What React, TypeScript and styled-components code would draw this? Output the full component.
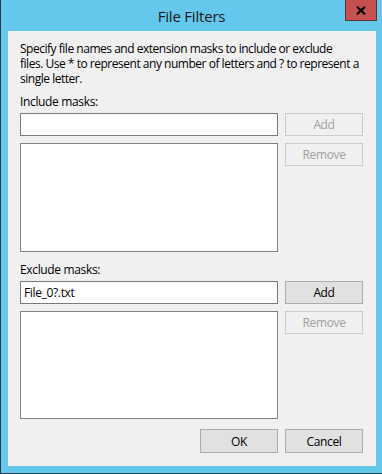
import React from "react";
import styled, { createGlobalStyle } from "styled-components";

const Global = createGlobalStyle`
  html, body { margin: 0; padding: 0; background: #ffffff; }
  * { box-sizing: border-box; }
`;

const FONT = `"Open Sans", "Noto Sans", "Liberation Sans", sans-serif`;

const Window = styled.div`
  width: 382px;
  height: 474px;
  background: #63c8ec;
  border-left: 1px solid #2f3a40;
  border-bottom: 1px solid #2f3a40;
  display: flex;
  flex-direction: column;
  font-family: ${FONT};
  color: #000;
`;

const TitleBar = styled.div`
  height: 31px;
  display: grid;
  grid-template-columns: 1fr auto 1fr;
  align-items: center;
`;

const Title = styled.div`
  grid-column: 2;
  font-size: 15px;
  line-height: 20px;
  color: #1a1a1a;
  letter-spacing: -0.2px;
`;

const CloseButton = styled.div`
  grid-column: 3;
  justify-self: end;
  align-self: start;
  width: 32px;
  height: 21px;
  margin-right: 5px;
  background: #c75050;
  border: 1px solid #5b3232;
  border-top: none;
  display: flex;
  align-items: center;
  justify-content: center;
`;

const Client = styled.div`
  height: 435px;
  margin: 0 6px 0 7px;
  background: #f0f0f0;
  padding: 10px 13px 13px 12px;
  display: flex;
  flex-direction: column;
  font-size: 12px;
  letter-spacing: -0.35px;
`;

const Description = styled.div`
  line-height: 15px;
  white-space: nowrap;
  letter-spacing: -0.48px;
`;

const Label = styled.div<{ $top: number }>`
  line-height: 15px;
  margin-top: ${(p) => p.$top}px;
  margin-bottom: 4px;
`;

const Grid = styled.div<{ $list: number }>`
  display: grid;
  grid-template-columns: 258px 78px;
  grid-template-rows: 23px ${(p) => p.$list}px;
  column-gap: 7px;
  row-gap: 7px;
`;

const TextBox = styled.div`
  background: #fff;
  border: 1px solid #7a7a7a;
  padding: 0 3px;
  display: flex;
  align-items: center;
  line-height: 15px;
`;

const ListBox = styled.div`
  background: #fff;
  border: 1px solid #828282;
`;

const Button = styled.div<{ $disabled?: boolean; $h?: number }>`
  height: ${(p) => p.$h ?? 23}px;
  width: 78px;
  align-self: start;
  border: 1px solid ${(p) => (p.$disabled ? "#cccccc" : "#adadad")};
  background: ${(p) => (p.$disabled ? "#f0f0f0" : "#e1e1e1")};
  color: ${(p) => (p.$disabled ? "#a0a0a0" : "#000")};
  display: flex;
  align-items: center;
  justify-content: center;
  line-height: 15px;
`;

const Footer = styled.div`
  margin-top: 10px;
  display: flex;
  justify-content: flex-end;
  gap: 7px;
`;

export default function App() {
  return (
    <>
      <Global />
      <Window>
        <TitleBar>
          <Title>File Filters</Title>
          <CloseButton>
            <svg width="10" height="9" viewBox="0 0 10 9">
              <path d="M1 0.8 L9 8.2 M9 0.8 L1 8.2" stroke="#000" strokeWidth="2.2" />
            </svg>
          </CloseButton>
        </TitleBar>
        <Client>
          <Description>
            Specify file names and extension masks to include or exclude
            <br />
            files. Use * to represent any number of letters and ? to represent a
            <br />
            single letter.
          </Description>
          <Label $top={8}>Include masks:</Label>
          <Grid $list={109}>
            <TextBox />
            <Button $disabled>Add</Button>
            <ListBox />
            <Button $disabled>Remove</Button>
          </Grid>
          <Label $top={10}>Exclude masks:</Label>
          <Grid $list={108}>
            <TextBox>File_0?.txt</TextBox>
            <Button>Add</Button>
            <ListBox />
            <Button $disabled>Remove</Button>
          </Grid>
          <Footer>
            <Button $h={24}>OK</Button>
            <Button $h={24}>Cancel</Button>
          </Footer>
        </Client>
      </Window>
    </>
  );
}
